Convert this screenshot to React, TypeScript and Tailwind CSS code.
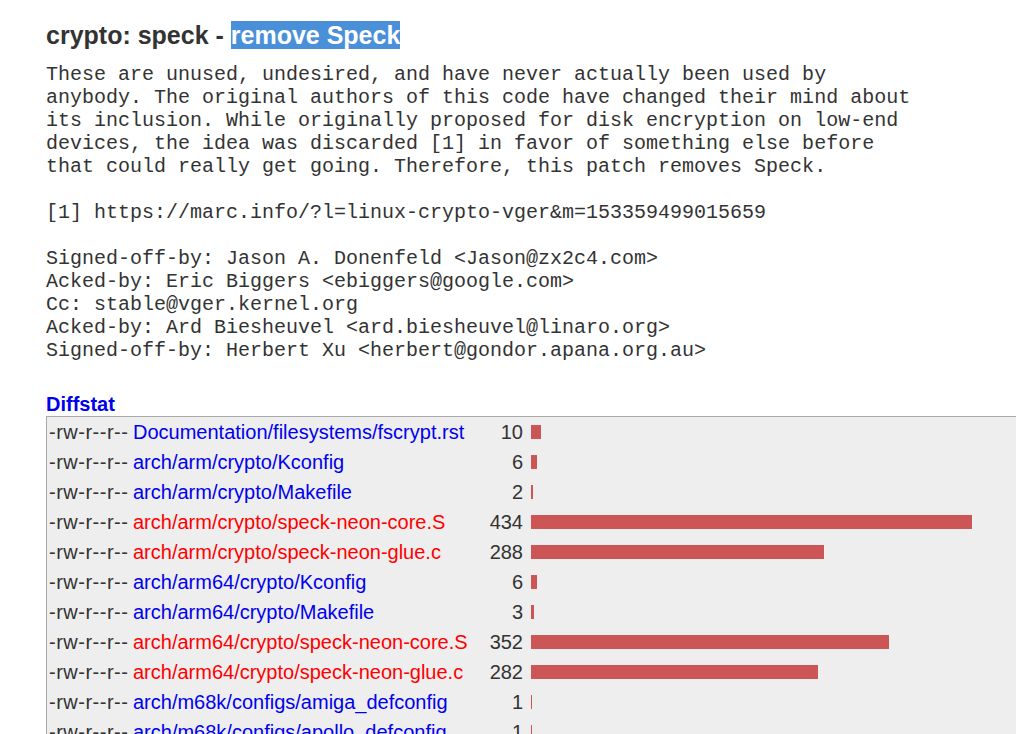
const message = `These are unused, undesired, and have never actually been used by
anybody. The original authors of this code have changed their mind about
its inclusion. While originally proposed for disk encryption on low-end
devices, the idea was discarded [1] in favor of something else before
that could really get going. Therefore, this patch removes Speck.

[1] https://marc.info/?l=linux-crypto-vger&m=153359499015659

Signed-off-by: Jason A. Donenfeld <Jason@zx2c4.com>
Acked-by: Eric Biggers <ebiggers@google.com>
Cc: stable@vger.kernel.org
Acked-by: Ard Biesheuvel <ard.biesheuvel@linaro.org>
Signed-off-by: Herbert Xu <herbert@gondor.apana.org.au>`;

type FileStat = { path: string; lines: number; removed?: boolean };

const files: FileStat[] = [
  { path: 'Documentation/filesystems/fscrypt.rst', lines: 10 },
  { path: 'arch/arm/crypto/Kconfig', lines: 6 },
  { path: 'arch/arm/crypto/Makefile', lines: 2 },
  { path: 'arch/arm/crypto/speck-neon-core.S', lines: 434, removed: true },
  { path: 'arch/arm/crypto/speck-neon-glue.c', lines: 288, removed: true },
  { path: 'arch/arm64/crypto/Kconfig', lines: 6 },
  { path: 'arch/arm64/crypto/Makefile', lines: 3 },
  { path: 'arch/arm64/crypto/speck-neon-core.S', lines: 352, removed: true },
  { path: 'arch/arm64/crypto/speck-neon-glue.c', lines: 282, removed: true },
  { path: 'arch/m68k/configs/amiga_defconfig', lines: 1 },
  { path: 'arch/m68k/configs/apollo_defconfig', lines: 1 },
];

// one pixel per line, roughly (434 lines -> 441px)
const scale = 441 / 434;

const Row = ({ f }: { f: FileStat }) => (
  <div className="flex items-center h-[30px]">
    <span className="w-[86px] pl-[2px] tracking-[0.5px] text-[#333] shrink-0">-rw-r--r--</span>
    <span className={`w-[340px] shrink-0 ${f.removed ? 'text-[#ff0000]' : 'text-[#0000ee]'}`}>{f.path}</span>
    <span className="w-[50px] shrink-0 text-right text-[#333]">{f.lines}</span>
    <span className="ml-[8px] flex items-center">
      <span className="block h-[14px] bg-[#cc5555]" style={{ width: Math.max(1, Math.round(f.lines * scale)) }} />
    </span>
  </div>
);

export default function App() {
  return (
    <div className="h-[734px] overflow-hidden bg-white pl-[46px] font-['Liberation_Sans',Arial,sans-serif]">
      <div className="pt-[21px] text-[25px] leading-[28px] font-bold text-[#333]">
        crypto: speck - <span className="bg-[#4a90d9] text-white">remove Speck</span>
      </div>
      <pre className="mt-[14px] font-['Liberation_Mono',monospace] text-[20px] leading-[23px] text-[#333]">{message}</pre>
      <div className="mt-[30px] text-[20px] leading-[24px] font-bold text-[#0000ee]">Diffstat</div>
      <div className="w-[1100px] border border-[#aaaaaa] bg-[#eeeeee] text-[20px]">
        {files.map((f) => (
          <Row key={f.path} f={f} />
        ))}
      </div>
    </div>
  );
}
